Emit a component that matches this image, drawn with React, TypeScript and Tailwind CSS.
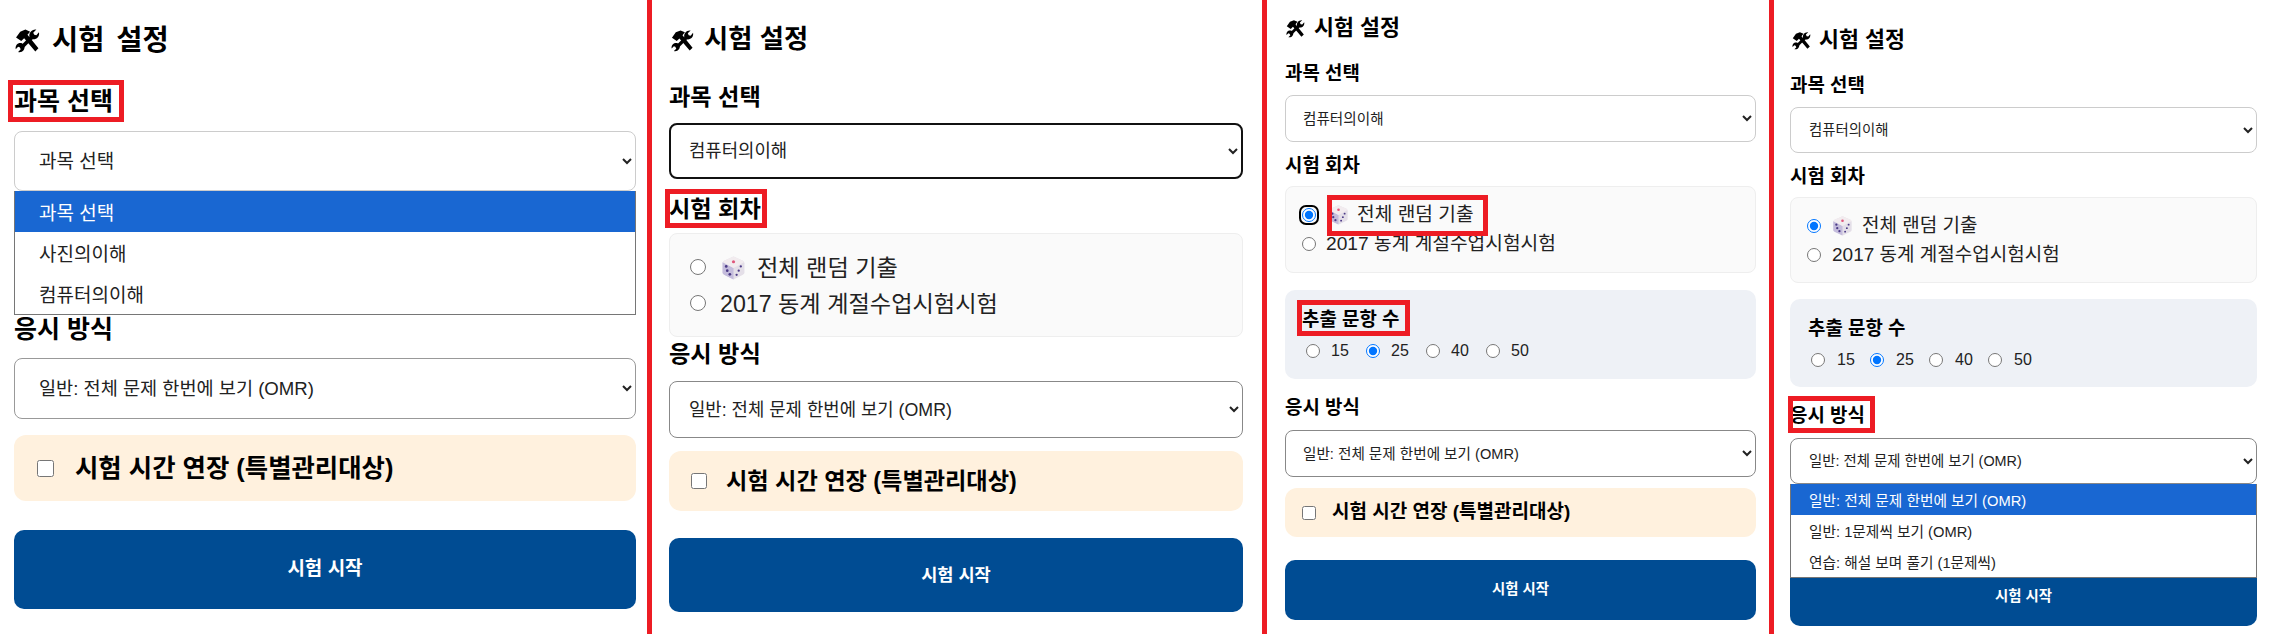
import React from "react";

function ToolsIcon({ className }: { className: string }) {
  return (
    <svg viewBox="0 0 24 24" className={className} fill="#000">
      <path d="M1 9 5 3.5 10 1.5l4.5 2L12 6.5l10.5 13-3 3L8.8 9.8 6 12.5z" />
      <path d="M5 17.5 15.5 7 18 9.5 7.5 20z" />
      <path d="M14 9C12.8 4.8 16 1 20.5 1.5l-3 3 1 2 2 .5L23 4c1 4.5-3 8-7.5 6.5z" />
      <path d="M9 17c1 3.5-2 7-6 6l2.5-2.5-1-2L3 18 .7 20.3C0 16.5 3 13.5 7 14.8z" />
    </svg>
  );
}

function DiceIcon({ className }: { className: string }) {
  return (
    <svg viewBox="0 0 24 24" className={className}>
      <path d="M12 1.5 21 5.5Q22.5 6.5 22.5 8V17Q22.5 18 21 19L13 23Q12 23.5 11 23L3 19Q1.5 18 1.5 17V8Q1.5 6.5 3 5.5z" fill="#e4dfe8" />
      <path d="M1.5 7 12 12.5V23.5L3 19Q1.5 18 1.5 17z" fill="#c4bcdc" />
      <path d="M12 1.5 21 5.5Q22 6 22 7L12 12.5 2 7Q2 6 3 5.5z" fill="#f2ecef" />
      <circle cx="12" cy="6.5" r="1.5" fill="#e0557a" />
      <circle cx="5" cy="11" r="1.3" fill="#4b3a86" />
      <circle cx="8.5" cy="18.5" r="1.3" fill="#4b3a86" />
      <circle cx="6" cy="15" r="1.3" fill="#4b3a86" />
      <circle cx="19" cy="11" r="1.1" fill="#4b3a86" />
      <circle cx="17" cy="15" r="1.1" fill="#4b3a86" />
      <circle cx="15" cy="19" r="1.1" fill="#4b3a86" />
    </svg>
  );
}

function RedBox({ className }: { className: string }) {
  return <div className={`pointer-events-none absolute z-20 border-[5px] border-[#ed1c24] ${className}`} />;
}

function Label({ className, children }: { className: string; children: React.ReactNode }) {
  return <div className={`flex h-[30px] items-center pt-[2px] font-bold text-black whitespace-pre ${className}`}>{children}</div>;
}

function Select({ className, value, options }: { className: string; value: string; options: string[] }) {
  return (
    <select defaultValue={value} className={`block w-full rounded-lg border bg-white text-[#222] ${className}`}>
      {options.map((o) => (
        <option key={o}>{o}</option>
      ))}
    </select>
  );
}

function Menu({ rowClass, options }: { rowClass: string; options: string[] }) {
  return (
    <div className="absolute left-0 right-0 top-full z-10 border-x border-b border-[#767676] bg-white text-[#222]">
      {options.map((o, i) => (
        <div key={o} className={`${rowClass} ${i === 0 ? "bg-[#1967d2] text-white" : ""}`}>
          {o}
        </div>
      ))}
    </div>
  );
}

function Extend({ className, boxClass, textClass }: { className: string; boxClass: string; textClass: string }) {
  return (
    <label className={`flex items-center rounded-xl bg-[#fff1de] ${className}`}>
      <input type="checkbox" className={`m-0 ${boxClass}`} />
      <span className={`font-bold text-black whitespace-nowrap ${textClass}`}>시험 시간 연장 (특별관리대상)</span>
    </label>
  );
}

function StartButton({ className }: { className: string }) {
  return (
    <button className={`block w-full rounded-[10px] bg-[#004c93] font-bold text-white ${className}`}>시험 시작</button>
  );
}

const subjects = ["과목 선택", "사진의이해", "컴퓨터의이해"];
const modes = ["일반: 전체 문제 한번에 보기 (OMR)", "일반: 1문제씩 보기 (OMR)", "연습: 해설 보며 풀기 (1문제씩)"];
const rounds = ["전체 랜덤 기출", "2017 동계 계절수업시험시험"];

function Divider() {
  return <div className="w-[5px] shrink-0 bg-[#ed1c24]" />;
}

function FirstPanel() {
  return (
    <section className="relative w-[647px] shrink-0 pl-[14px] pr-[11px] pt-[24px]">
      <Label className="text-[28.5px] [word-spacing:4px]">
        <ToolsIcon className="ml-[1px] mr-[12px] h-[25px] w-[25px]" />
        시험 설정
      </Label>
      <Label className="mt-[32px] text-[25px]">과목 선택</Label>
      <RedBox className="left-[8px] top-[80px] h-[42px] w-[116px]" />
      <div className="relative mb-[123px] mt-[15px]">
        <Select className="h-[60px] border-[#ccc] pl-[20px] text-[19px]" value="과목 선택" options={subjects} />
        <Menu rowClass="h-[41px] pl-[24px] text-[19px] leading-[45px]" options={subjects} />
      </div>
      <Label className="text-[25px]">응시 방식</Label>
      <div className="mt-[14px]">
        <Select className="h-[61px] border-[#999] pl-[20px] text-[18.6px]" value={modes[0]} options={modes} />
      </div>
      <Extend className="mt-[16px] h-[66px] pl-[23px]" boxClass="h-[17px] w-[17px]" textClass="ml-[21px] text-[25.4px]" />
      <StartButton className="mt-[29px] h-[79px] text-[19px]" />
    </section>
  );
}

function SecondPanel() {
  return (
    <section className="relative w-[610px] shrink-0 pl-[17px] pr-[19px] pt-[24px]">
      <Label className="text-[26.3px]">
        <ToolsIcon className="ml-[2px] mr-[10px] h-[23px] w-[23px]" />
        시험 설정
      </Label>
      <Label className="mt-[27px] text-[23.2px]">과목 선택</Label>
      <div className="mt-[12px]">
        <Select className="h-[56px] border-2 border-[#111] pl-[14px] text-[17.8px]" value="컴퓨터의이해" options={subjects} />
      </div>
      <Label className="mt-[14px] text-[23.2px]">시험 회차</Label>
      <RedBox className="left-[13px] top-[189px] h-[39px] w-[102px]" />
      <div className="mt-[10px] h-[104px] rounded-lg border border-[#eee] bg-[#fafafa] pl-[20px] pt-[15px] text-[23.2px] text-[#222]">
        <div className="flex h-[36px] items-center whitespace-nowrap">
          <input type="radio" name="p2r" className="m-0 h-[16px] w-[16px]" />
          <DiceIcon className="ml-[15px] mr-[11px] h-[25px] w-[25px]" />
          <span className="pt-[2px]">{rounds[0]}</span>
        </div>
        <div className="flex h-[36px] items-center whitespace-nowrap">
          <input type="radio" name="p2r" className="m-0 h-[16px] w-[16px]" />
          <span className="ml-[14px] pt-[2px]">{rounds[1]}</span>
        </div>
      </div>
      <Label className="mt-[1px] text-[23.2px]">응시 방식</Label>
      <div className="mt-[13px]">
        <Select className="h-[57px] border-[#888] pl-[15px] text-[17.8px]" value={modes[0]} options={modes} />
      </div>
      <Extend className="mt-[13px] h-[60px] pl-[22px]" boxClass="h-[16px] w-[16px]" textClass="ml-[19px] text-[23.2px]" />
      <StartButton className="mt-[27px] h-[74px] text-[17.6px]" />
    </section>
  );
}

function CountRow({ className, itemClass, textClass, name }: { className: string; itemClass: string; textClass: string; name: string }) {
  return (
    <div className={`flex items-center text-[#222] ${className}`}>
      {["15", "25", "40", "50"].map((n) => (
        <label key={n} className={`flex shrink-0 items-center ${itemClass}`}>
          <input type="radio" name={name} defaultChecked={n === "25"} className="m-0 h-[14px] w-[14px]" />
          <span className={textClass}>{n}</span>
        </label>
      ))}
    </div>
  );
}

function ThirdPanel() {
  return (
    <section className="relative w-[502px] shrink-0 pl-[18px] pr-[13px] pt-[12px]">
      <Label className="text-[21.7px]">
        <ToolsIcon className="ml-[1px] mr-[9px] h-[19px] w-[19px]" />
        시험 설정
      </Label>
      <Label className="mt-[16px] text-[18.9px]">과목 선택</Label>
      <div className="mt-[7px]">
        <Select className="h-[47px] border-[#ccc] pl-[13px] text-[14.6px]" value="컴퓨터의이해" options={subjects} />
      </div>
      <Label className="mt-[8px] text-[18.9px]">시험 회차</Label>
      <div className="mt-[6px] h-[87px] rounded-lg border border-[#eee] bg-[#fafafa] pl-[16px] pt-[13px] text-[19.2px] text-[#222]">
        <div className="flex h-[29px] items-center whitespace-nowrap">
          <span className="relative flex">
            <input type="radio" name="p3r" defaultChecked className="m-0 h-[14px] w-[14px]" />
            <span className="absolute -inset-[3px] rounded-[7px] border-2 border-black" />
          </span>
          <DiceIcon className="ml-[12px] mr-[8px] h-[21px] w-[21px]" />
          <span className="pt-[2px]">{rounds[0]}</span>
        </div>
        <div className="flex h-[29px] items-center whitespace-nowrap">
          <input type="radio" name="p3r" className="m-0 h-[14px] w-[14px]" />
          <span className="ml-[10px] pt-[2px]">{rounds[1]}</span>
        </div>
      </div>
      <RedBox className="left-[60px] top-[195px] h-[41px] w-[161px]" />
      <div className="mt-[17px] h-[89px] rounded-[10px] bg-[#eef1f6] pl-[17px] pt-[14px]">
        <Label className="text-[18.9px]">추출 문항 수</Label>
        <CountRow className="ml-[4px] mt-[6px] h-[22px]" itemClass="w-[60px]" textClass="ml-[11px] text-[16px]" name="p3c" />
      </div>
      <RedBox className="left-[30px] top-[300px] h-[36px] w-[113px]" />
      <Label className="mt-[13px] text-[18.9px]">응시 방식</Label>
      <div className="mt-[8px]">
        <Select className="h-[47px] border-[#888] pl-[13px] text-[14.6px]" value={modes[0]} options={modes} />
      </div>
      <Extend className="mt-[11px] h-[49px] pl-[17px]" boxClass="h-[14px] w-[14px]" textClass="ml-[16px] text-[19px]" />
      <StartButton className="mt-[23px] h-[60px] text-[14.4px]" />
    </section>
  );
}

function FourthPanel() {
  return (
    <section className="relative w-[497px] shrink-0 pl-[16px] pr-[14px] pt-[24px]">
      <Label className="text-[21.7px]">
        <ToolsIcon className="ml-[2px] mr-[8px] h-[19px] w-[19px]" />
        시험 설정
      </Label>
      <Label className="mt-[16px] text-[18.9px]">과목 선택</Label>
      <div className="mt-[7px]">
        <Select className="h-[46px] border-[#ccc] pl-[14px] text-[14.4px]" value="컴퓨터의이해" options={subjects} />
      </div>
      <Label className="mt-[8px] text-[18.9px]">시험 회차</Label>
      <div className="mt-[6px] h-[86px] rounded-lg border border-[#eee] bg-[#fafafa] pl-[16px] pt-[13px] text-[19px] text-[#222]">
        <div className="flex h-[29px] items-center whitespace-nowrap">
          <input type="radio" name="p4r" defaultChecked className="m-0 h-[14px] w-[14px]" />
          <DiceIcon className="ml-[11px] mr-[9px] h-[21px] w-[21px]" />
          <span className="pt-[2px]">{rounds[0]}</span>
        </div>
        <div className="flex h-[29px] items-center whitespace-nowrap">
          <input type="radio" name="p4r" className="m-0 h-[14px] w-[14px]" />
          <span className="ml-[11px] pt-[2px]">{rounds[1]}</span>
        </div>
      </div>
      <div className="mt-[16px] h-[88px] rounded-[10px] bg-[#eef1f6] pl-[18px] pt-[14px]">
        <Label className="text-[18.9px]">추출 문항 수</Label>
        <CountRow className="ml-[3px] mt-[6px] h-[22px]" itemClass="w-[59px]" textClass="ml-[12px] text-[16px]" name="p4c" />
      </div>
      <Label className="mt-[13px] text-[18.9px]">응시 방식</Label>
      <RedBox className="left-[14px] top-[396px] h-[37px] w-[87px]" />
      <div className="relative mt-[8px]">
        <Select className="h-[46px] border-[#888] pl-[14px] text-[14.4px]" value={modes[0]} options={modes} />
        <Menu rowClass="h-[31px] pl-[18px] text-[14.7px] leading-[35px]" options={modes} />
      </div>
      <Extend className="mt-[11px] h-[49px] pl-[17px]" boxClass="h-[14px] w-[14px]" textClass="ml-[16px] text-[19px]" />
      <StartButton className="mt-[22px] h-[60px] pt-[2px] text-[14.4px]" />
    </section>
  );
}

export default function App() {
  return (
    <div className="flex h-[634px] w-[2271px] overflow-hidden bg-white font-['Liberation_Sans','Noto_Sans_CJK_KR',sans-serif]">
      <FirstPanel />
      <Divider />
      <SecondPanel />
      <Divider />
      <ThirdPanel />
      <Divider />
      <FourthPanel />
    </div>
  );
}
